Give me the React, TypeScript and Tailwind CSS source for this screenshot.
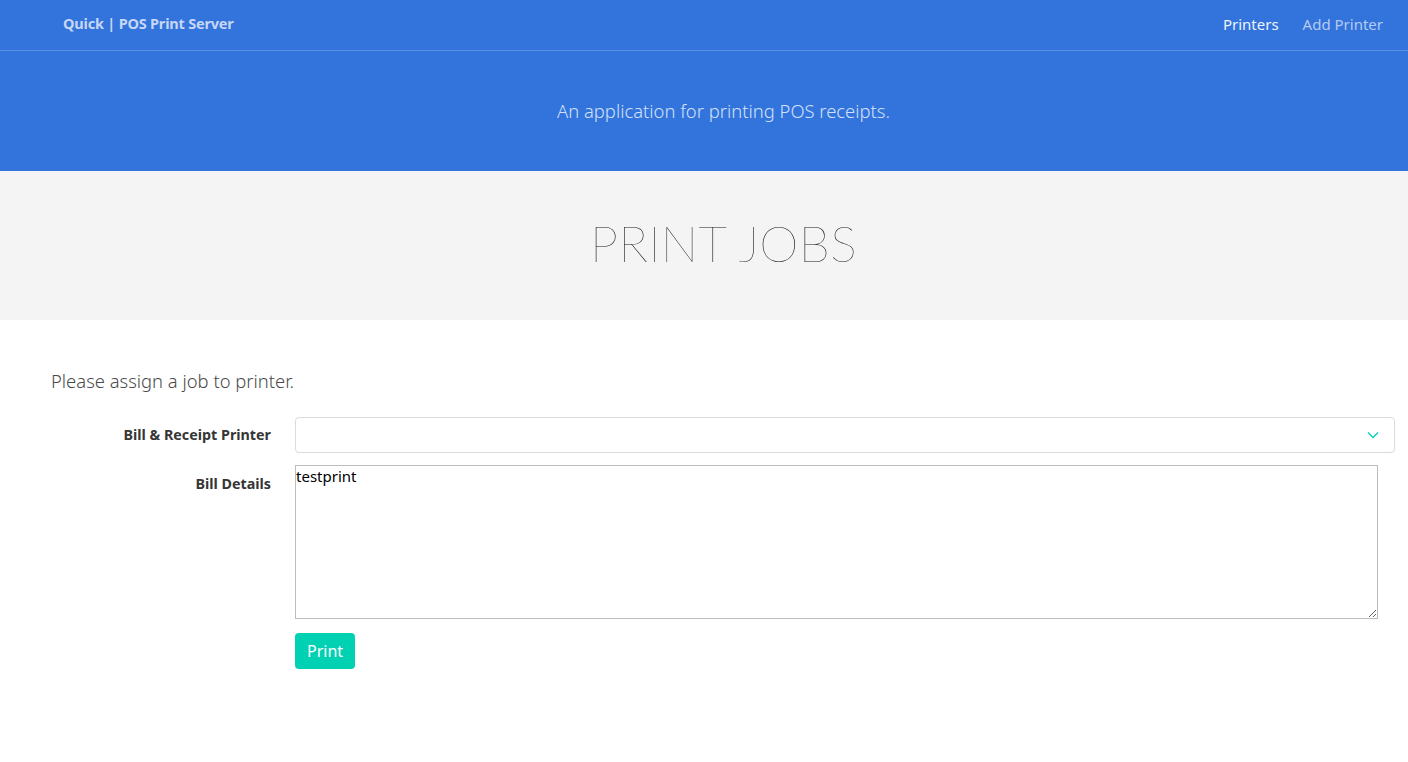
import React from "react";

const font = { fontFamily: '"Noto Sans", "Open Sans", sans-serif' };

export default function App() {
  return (
    <div className="min-h-[762px] bg-white text-[#4a4a4a]" style={font}>
      <nav className="h-[51px] bg-[#3273dc] border-b border-[#5a8fe3] flex items-center justify-between pl-[63px] pr-[25px]">
        <span className="text-[14.5px] font-bold text-[#c6d7f5] tracking-[-0.2px] -mt-[2px]">Quick | POS Print Server</span>
        <div className="flex items-center gap-[24px] text-[15px] -mt-[2px]">
          <span className="text-[#eef3fc]">Printers</span>
          <span className="text-[#b4cbf2]">Add Printer</span>
        </div>
      </nav>
      <section className="h-[120px] bg-[#3273dc] flex items-center justify-center pl-[39px]">
        <p className="text-[18.4px] font-light text-[#d3e1f8]">An application for printing POS receipts.</p>
      </section>
      <section className="h-[149px] bg-[#f4f4f4] flex items-center justify-center pl-[39px]">
        <h1 className="text-[50px] font-extralight tracking-[0.3px] text-[#111111] -mt-[4px]" style={{ fontFamily: '"Lato", "Open Sans", sans-serif' }}>PRINT JOBS</h1>
      </section>
      <main className="pl-[51px] pr-[13px] pt-[48px]">
        <p className="text-[18.4px] font-light text-[#4a4a4a] leading-[26px]">Please assign a job to printer.</p>
        <div className="mt-[23px] flex flex-col">
          <div className="flex items-center">
            <label className="w-[220px] text-right text-[14.3px] font-bold text-[#363636]">Bill &amp; Receipt Printer</label>
            <div className="ml-[24px] flex-1 h-[36px] border border-[#dbdbdb] rounded-[4px] flex items-center justify-end pr-[15px]">
              <svg width="12" height="8" viewBox="0 0 12 8" fill="none" stroke="#00d1b2" strokeWidth="1.3">
                <path d="M1 1.5 L6 6.5 L11 1.5" />
              </svg>
            </div>
          </div>
          <div className="flex items-start mt-[12px]">
            <label className="w-[220px] text-right text-[14.3px] font-bold text-[#363636] pt-[8px]">Bill Details</label>
            <div className="ml-[24px] flex-1 pr-[17px]">
              <textarea
                defaultValue="testprint"
                spellCheck={false}
                className="block w-full h-[154px] border border-[#bdbdbd] text-[15px] text-black leading-[20px] p-0 outline-none"
                style={font}
              />
              <button className="mt-[14px] h-[36px] px-[12px] bg-[#00d1b2] text-white text-[16px] rounded-[4px]">Print</button>
            </div>
          </div>
        </div>
      </main>
    </div>
  );
}
